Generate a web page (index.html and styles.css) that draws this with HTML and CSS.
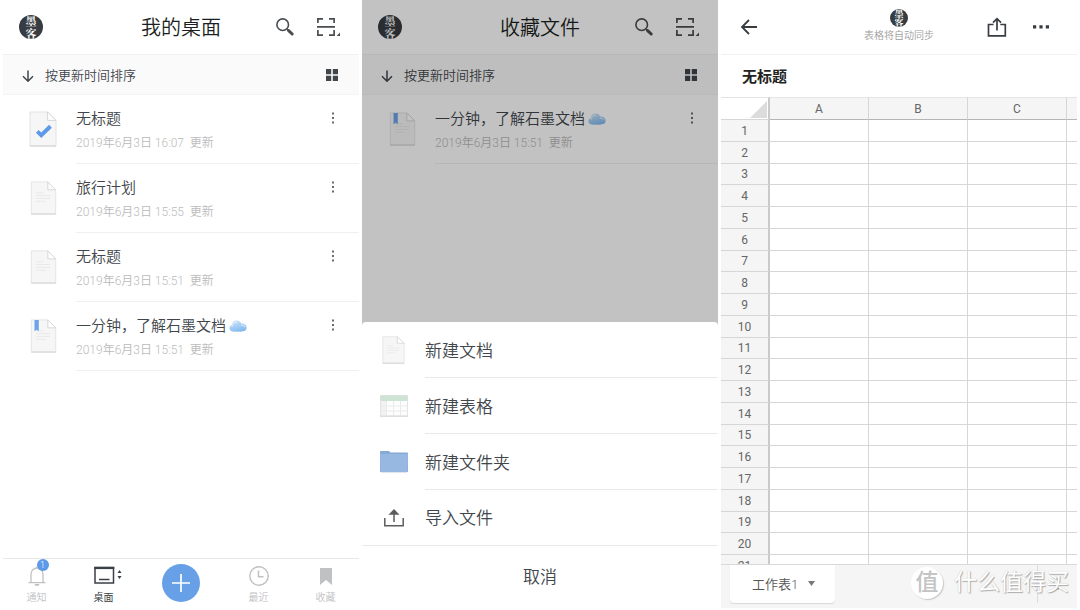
FILE: index.html
```
<!DOCTYPE html>
<html lang="zh-CN">
<head>
<meta charset="utf-8">
<title>石墨文档</title>
<link rel="stylesheet" href="styles.css">
</head>
<body>
<svg class="defs" aria-hidden="true">
  <defs>
    <linearGradient id="cloudFill" x1="0" y1="0" x2="0.4" y2="1">
      <stop offset="0" stop-color="#d3e8fa"/><stop offset="1" stop-color="#85bbef"/>
    </linearGradient>
    <symbol id="search" viewBox="0 0 20 20">
      <circle cx="7.7" cy="7.7" r="5.8" fill="none" stroke="currentColor" stroke-width="1.6"/>
      <path d="M12 12l1.5 1.5" stroke="currentColor" stroke-width="1.6"/>
      <path d="M13.6 13.6l3.6 3.4" stroke="currentColor" stroke-width="3" stroke-linecap="round"/>
    </symbol>
    <symbol id="scan" viewBox="0 0 24 20">
      <path d="M1.9 6V1.9H7M13 1.9h5.1V6M1.9 13v5.1H7M13 18.1h5.1V13M1 9.8h18" fill="none" stroke="currentColor" stroke-width="1.7"/>
      <path d="M24 15.6V19h-3.4z" fill="currentColor"/>
    </symbol>
    <symbol id="down" viewBox="0 0 12 12">
      <path d="M6 .6v10.2M1 6.2l5 5 5-5" fill="none" stroke="currentColor" stroke-width="1.5"/>
    </symbol>
    <symbol id="tiles" viewBox="0 0 12 12">
      <path d="M0 0h5.2v5.2H0zM6.8 0H12v5.2H6.8zM0 6.8h5.2V12H0zM6.8 6.8H12V12H6.8z" fill="currentColor"/>
    </symbol>
    <symbol id="more" viewBox="0 0 4 12">
      <path d="M1.2.6h1.6v1.8H1.2zM1.2 5.1h1.6v1.8H1.2zM1.2 9.6h1.6v1.8H1.2z" fill="currentColor"/>
    </symbol>
    <symbol id="page" viewBox="0 0 28 36">
      <path d="M1 1h17.6L27 9.4V35H1z" fill="#f6f6f6" stroke="#e2e2e2"/>
      <path d="M1 35h26" stroke="#d2d2d2"/>
      <path d="M18.6 1v8.4H27z" fill="#fff" stroke="#d6d6d6"/>
    </symbol>
    <symbol id="lines" viewBox="0 0 28 36">
      <path d="M6 12.5h8M6 15.500h15M6 18.500h15M6 21.500h10" stroke="#e8e8e8"/>
    </symbol>
    <symbol id="cloud" viewBox="0 0 18 12">
      <path d="M4.200 11.600C1.800 11.600.4 10 .4 8.300c0-1.600 1-2.700 2.400-3C2.900 2.400 4.900.4 7.600.4c2.200 0 4 1.200 4.700 3.200C15.200 3.500 17.600 5.100 17.600 7.700c0 2.300-1.700 3.700-4 3.600-1 .5-2 .5-2.900.1-1.100.6-2.500.6-3.500 0-.9.3-1.900.4-3 .2z" fill="url(#cloudFill)"/>
      <path d="M3 6.600c.5-3 2.500-4.700 5-4.300M12 5.200c1.900-.4 3.500.6 3.800 2" fill="none" stroke="#e6f3fd" stroke-width="1"/>
    </symbol>
  </defs>
</svg>

<main class="screens">
  <section class="screen">
    <header class="bar">
      <span class="avatar">墨<br>客</span>
      <h1 class="bar-title">我的桌面</h1>
      <div class="bar-actions">
        <button class="icon-btn" aria-label="搜索"><svg width="20" height="20"><use href="#search"/></svg></button>
        <button class="icon-btn" aria-label="扫描"><svg width="24" height="20"><use href="#scan"/></svg></button>
      </div>
    </header>
    <div class="sort">
      <button class="sort-btn"><svg width="12" height="12"><use href="#down"/></svg>按更新时间排序</button>
      <button class="icon-btn" aria-label="网格视图"><svg width="12" height="12"><use href="#tiles"/></svg></button>
    </div>
    <ul class="files">
      <li class="file">
        <span class="file-icon"><svg width="28" height="36" viewBox="0 0 28 36"><use href="#page"/><path d="M8.300 20.300l4 4 9.200-9" fill="none" stroke="#5f9ae6" stroke-width="4"/></svg></span>
        <div class="file-body">
          <div><h2 class="file-name">无标题</h2><p class="file-date">2019年6月3日 16:07&nbsp; 更新</p></div>
          <button class="more" aria-label="更多"><svg width="4" height="12"><use href="#more"/></svg></button>
        </div>
      </li>
      <li class="file">
        <span class="file-icon"><svg width="27" height="34" viewBox="0 0 28 36"><use href="#page"/><use href="#lines"/></svg></span>
        <div class="file-body">
          <div><h2 class="file-name">旅行计划</h2><p class="file-date">2019年6月3日 15:55&nbsp; 更新</p></div>
          <button class="more" aria-label="更多"><svg width="4" height="12"><use href="#more"/></svg></button>
        </div>
      </li>
      <li class="file">
        <span class="file-icon"><svg width="27" height="34" viewBox="0 0 28 36"><use href="#page"/><use href="#lines"/></svg></span>
        <div class="file-body">
          <div><h2 class="file-name">无标题</h2><p class="file-date">2019年6月3日 15:51&nbsp; 更新</p></div>
          <button class="more" aria-label="更多"><svg width="4" height="12"><use href="#more"/></svg></button>
        </div>
      </li>
      <li class="file">
        <span class="file-icon"><svg width="27" height="34" viewBox="0 0 28 36"><use href="#page"/><use href="#lines"/><path d="M4.500 1h4.500v12l-2.250-1.500L4.500 13z" fill="#6ba2ea"/></svg></span>
        <div class="file-body">
          <div><h2 class="file-name">一分钟，了解石墨文档<svg class="cloud" width="18" height="12"><use href="#cloud"/></svg></h2><p class="file-date">2019年6月3日 15:51&nbsp; 更新</p></div>
          <button class="more" aria-label="更多"><svg width="4" height="12"><use href="#more"/></svg></button>
        </div>
      </li>
    </ul>
    <nav class="tabs">
      <a class="tab" href="#notice">
        <span class="tab-icon">
          <svg width="20" height="22" viewBox="0 0 20 22"><path d="M4 17.500V9a6 6 0 0 1 12 0v8.500M1.500 17.600h17" fill="none" stroke="currentColor" stroke-width="1.300"/><path d="M10 1.500V3" stroke="currentColor" stroke-width="1.500"/><path d="M7.500 19h5a2.500 2 0 0 1-5 0z" fill="currentColor"/></svg>
          <span class="badge">1</span>
        </span>
        通知
      </a>
      <a class="tab active" href="#desktop">
        <span class="tab-icon"><svg class="spill" width="20" height="22" viewBox="0 0 20 22"><path d="M1 2.500h18.500v15.500H1z" fill="none" stroke="currentColor" stroke-width="1.500"/><path d="M.3 3h20" stroke="currentColor" stroke-width="2.200"/><path d="M5 14.500h10.500" stroke="currentColor" stroke-width="1.500"/><path d="M23.500 8l2-3 2 3zM23.500 11l2 3 2-3z" fill="currentColor"/></svg></span>
        桌面
      </a>
      <button class="add" aria-label="新建"><svg width="18" height="18" viewBox="0 0 18 18"><path d="M9 0v18M0 9h18" stroke="#fff" stroke-width="1.700"/></svg></button>
      <a class="tab" href="#recent">
        <span class="tab-icon"><svg width="20" height="22" viewBox="0 0 20 22"><circle cx="10" cy="11" r="9.200" fill="none" stroke="currentColor" stroke-width="1.400"/><path d="M9.500 5.500v6.300h5" fill="none" stroke="currentColor" stroke-width="1.500"/></svg></span>
        最近
      </a>
      <a class="tab" href="#favorites">
        <span class="tab-icon"><svg width="14" height="22" viewBox="0 0 14 22"><path d="M1 3h12v17l-6-5-6 5z" fill="currentColor"/></svg></span>
        收藏
      </a>
    </nav>
  </section>

  <section class="screen">
    <header class="bar">
      <span class="avatar">墨<br>客</span>
      <h1 class="bar-title">收藏文件</h1>
      <div class="bar-actions">
        <button class="icon-btn" aria-label="搜索"><svg width="20" height="20"><use href="#search"/></svg></button>
        <button class="icon-btn" aria-label="扫描"><svg width="24" height="20"><use href="#scan"/></svg></button>
      </div>
    </header>
    <div class="sort">
      <button class="sort-btn"><svg width="12" height="12"><use href="#down"/></svg>按更新时间排序</button>
      <button class="icon-btn" aria-label="网格视图"><svg width="12" height="12"><use href="#tiles"/></svg></button>
    </div>
    <ul class="files">
      <li class="file">
        <span class="file-icon"><svg width="27" height="34" viewBox="0 0 28 36"><use href="#page"/><use href="#lines"/><path d="M4.500 1h4.500v12l-2.250-1.500L4.500 13z" fill="#6ba2ea"/></svg></span>
        <div class="file-body">
          <div><h2 class="file-name">一分钟，了解石墨文档<svg class="cloud" width="18" height="12"><use href="#cloud"/></svg></h2><p class="file-date">2019年6月3日 15:51&nbsp; 更新</p></div>
          <button class="more" aria-label="更多"><svg width="4" height="12"><use href="#more"/></svg></button>
        </div>
      </li>
    </ul>
    <div class="scrim"></div>
    <div class="sheet">
      <button class="option"><span class="option-icon"><svg width="23" height="28" viewBox="0 0 28 36" preserveAspectRatio="none"><use href="#page"/><use href="#lines"/></svg></span><span class="option-label">新建文档</span></button>
      <button class="option"><span class="option-icon"><svg width="28" height="22" viewBox="0 0 28 22"><path d="M.5.500h27v20.500H.500z" fill="#fdfdfd" stroke="#e4e4e4"/><path d="M1 6h5v15H1z" fill="#f2f2f2"/><path d="M6.500 6v15M13.500 6v15M20.500 6v15M1 11h26M1 16h26" stroke="#ebebeb"/><path d="M.5.500h27V6H.500z" fill="#cfe3d5"/><path d="M0 21.200h28" stroke="#d4d4d4"/></svg></span><span class="option-label">新建表格</span></button>
      <button class="option"><span class="option-icon"><svg width="28" height="24" viewBox="0 0 28 24"><path d="M0 2q0-1 1-1h8l1.500 1.500H27q1 0 1 1V21q0 1-1 1H1q-1 0-1-1z" fill="#86a9d6"/><path d="M0 4h28l-.5 18H.5z" fill="#97b8e1"/><path d="M1 22.600h26" stroke="#dce4ef"/></svg></span><span class="option-label">新建文件夹</span></button>
      <button class="option last"><span class="option-icon"><svg width="22" height="20" viewBox="0 0 22 20"><path d="M1.800 10v7.800h18.400V10M11 14V5" fill="none" stroke="#5c5c5c" stroke-width="1.500"/><path d="M5.500 6.800L11 1l5.500 5.800z" fill="#5c5c5c"/></svg></span><span class="option-label">导入文件</span></button>
      <button class="cancel">取消</button>
    </div>
  </section>

  <section class="screen">
    <header class="bar">
      <button class="icon-btn back" aria-label="返回"><svg width="18" height="16" viewBox="0 0 18 16"><path d="M9 1L2 8l7 7M2 8h15" fill="none" stroke="currentColor" stroke-width="1.800"/></svg></button>
      <div class="sync"><span class="avatar small">墨<br>客</span><span>表格将自动同步</span></div>
      <div class="bar-actions sheet-actions">
        <button class="icon-btn" aria-label="分享"><svg width="20" height="20" viewBox="0 0 20 20"><path d="M6.500 7.500h-5v11.300h16.800V7.500h-5M10 13.500V2M6 5.600L10 1.600l4 4" fill="none" stroke="currentColor" stroke-width="1.700"/></svg></button>
        <button class="icon-btn" aria-label="更多"><svg width="16" height="4" viewBox="0 0 16 4"><path d="M0 .3h3.200v3.200H0zM6.400.3h3.200v3.200H6.400zM12.800.3H16v3.200h-3.200z" fill="currentColor"/></svg></button>
      </div>
    </header>
    <h1 class="doc-title">无标题</h1>
    <div class="grid-wrap">
      <table class="cells">
        <colgroup><col class="col-num"><col class="col-data"><col class="col-data"><col class="col-data"><col></colgroup>
        <thead><tr><th class="corner"><svg width="17" height="17" viewBox="0 0 17 17"><path d="M17 0v17H0z" fill="#dcdcdc"/></svg></th><th>A</th><th>B</th><th>C</th><th></th></tr></thead>
        <tbody>
          <tr><th>1</th><td></td><td></td><td></td><td></td></tr>
          <tr><th>2</th><td></td><td></td><td></td><td></td></tr>
          <tr><th>3</th><td></td><td></td><td></td><td></td></tr>
          <tr><th>4</th><td></td><td></td><td></td><td></td></tr>
          <tr><th>5</th><td></td><td></td><td></td><td></td></tr>
          <tr><th>6</th><td></td><td></td><td></td><td></td></tr>
          <tr><th>7</th><td></td><td></td><td></td><td></td></tr>
          <tr><th>8</th><td></td><td></td><td></td><td></td></tr>
          <tr><th>9</th><td></td><td></td><td></td><td></td></tr>
          <tr><th>10</th><td></td><td></td><td></td><td></td></tr>
          <tr><th>11</th><td></td><td></td><td></td><td></td></tr>
          <tr><th>12</th><td></td><td></td><td></td><td></td></tr>
          <tr><th>13</th><td></td><td></td><td></td><td></td></tr>
          <tr><th>14</th><td></td><td></td><td></td><td></td></tr>
          <tr><th>15</th><td></td><td></td><td></td><td></td></tr>
          <tr><th>16</th><td></td><td></td><td></td><td></td></tr>
          <tr><th>17</th><td></td><td></td><td></td><td></td></tr>
          <tr><th>18</th><td></td><td></td><td></td><td></td></tr>
          <tr><th>19</th><td></td><td></td><td></td><td></td></tr>
          <tr><th>20</th><td></td><td></td><td></td><td></td></tr>
          <tr><th>21</th><td></td><td></td><td></td><td></td></tr>
        </tbody>
      </table>
    </div>
    <footer class="sheet-bar">
      <button class="sheet-tab">工作表1<svg width="7" height="5" viewBox="0 0 7 5"><path d="M0 0h7L3.500 5z" fill="#777"/></svg></button>
      <button class="sheet-more" aria-label="更多"><svg width="4" height="12"><use href="#more"/></svg></button>
    </footer>
    <div class="watermark"><span class="mark">值</span><span>什么值得买</span></div>
  </section>
</main>
</body>
</html>
```
FILE: styles.css
```
* { box-sizing: border-box; }

body {
  margin: 0;
  background: #fff;
  color: #41464b;
  font-family: Roboto, "Noto Sans CJK SC", sans-serif;
  font-weight: 350;
}

button {
  margin: 0;
  padding: 0;
  border: 0;
  background: none;
  color: inherit;
  font: inherit;
}

h1, h2, p, ul { margin: 0; padding: 0; font-weight: inherit; }
svg { display: block; flex: none; }
.defs { position: absolute; width: 0; height: 0; }
.spill { overflow: visible; }

.screens {
  display: grid;
  grid-template-columns: repeat(3, minmax(0, 1fr));
  gap: 3px;
  height: 100vh;
  padding: 0 3px 2px;
}

.screen {
  position: relative;
  display: flex;
  flex-direction: column;
  min-height: 0;
  background: #fff;
}

/* Top bar */
.bar {
  display: grid;
  grid-template-columns: 1fr auto 1fr;
  align-items: center;
  height: 55px;
  flex: none;
  padding: 0 16px;
  border-bottom: 1px solid #f1f1f1;
}
.bar-title { padding-top: 2px; color: #1c1f21; font-size: 20px; line-height: 28px; }
.bar-actions { display: flex; justify-content: flex-end; align-items: center; gap: 21px; padding-right: 3px; color: #4a4d50; }
.sheet-actions { gap: 26px; padding-right: 12px; color: #383d42; }
.icon-btn { display: flex; }
.back { padding-left: 3px; color: #383d42; }

.avatar {
  display: flex;
  align-items: center;
  justify-content: center;
  width: 24px;
  height: 24px;
  border-radius: 50%;
  overflow: hidden;
  background: #363c41;
  color: #fff;
  font-family: "Noto Serif CJK SC", "Noto Sans CJK SC", serif;
  font-size: 11px;
  font-weight: 700;
  line-height: 12px;
}
.avatar.small { width: 18px; height: 18px; font-size: 9px; line-height: 9px; }

/* Sort strip */
.sort {
  display: flex;
  align-items: center;
  justify-content: space-between;
  height: 40px;
  flex: none;
  padding: 0 21px 0 19px;
  border-bottom: 1px solid #f4f4f4;
  background: #fafafa;
}
.sort-btn { display: flex; align-items: center; gap: 11px; padding-top: 2px; font-size: 13px; line-height: 20px; }

/* File list */
.files { flex: 1; list-style: none; }
.file { display: flex; gap: 19px; padding-left: 26px; }
.file-icon { display: flex; align-items: center; justify-content: center; width: 28px; height: 36px; margin-top: 16px; }
.file-body {
  display: flex;
  flex: 1;
  justify-content: space-between;
  align-items: flex-start;
  height: 69px;
  padding: 13px 24px 0 0;
  border-bottom: 1px solid #f0f0f0;
}
.file-name { display: flex; align-items: center; gap: 3px; font-size: 15px; line-height: 22px; }
.file-date { margin-top: 4px; color: #bbb; font-size: 12px; line-height: 18px; }
.more { display: flex; padding-top: 4px; }

/* Bottom navigation */
.tabs {
  display: grid;
  grid-template-columns: 67px 67px 1fr 67px 67px;
  height: 50px;
  flex: none;
  border-top: 1px solid #e8e8e8;
}
.tab {
  display: flex;
  flex-direction: column;
  align-items: center;
  gap: 3px;
  padding-top: 6px;
  color: #bfc1c3;
  font-size: 10px;
  line-height: 16px;
  text-decoration: none;
}
.tab.active { color: #3b4045; font-weight: 400; }
.tab-icon { position: relative; }
.badge {
  position: absolute;
  top: -6px;
  left: 10px;
  width: 12px;
  height: 12px;
  border-radius: 50%;
  background: #5c99e6;
  color: #fff;
  font-size: 9px;
  line-height: 12px;
  text-align: center;
}
.add {
  display: flex;
  align-items: center;
  justify-content: center;
  margin-top: 5px;
  justify-self: center;
  width: 38px;
  height: 38px;
  border-radius: 50%;
  background: #68a0e8;
}

/* Action sheet */
.scrim { position: absolute; inset: 0; background: rgba(0, 0, 0, .24); }
.sheet {
  position: absolute;
  right: 0;
  bottom: 0;
  left: 0;
  display: grid;
  grid-template-rows: repeat(4, 56px) 62px;
  border-radius: 4px 4px 0 0;
  background: #fff;
  font-size: 17px;
  line-height: 24px;
}
.option { display: flex; align-items: stretch; text-align: left; }
.option-icon { display: flex; align-items: center; justify-content: center; width: 63px; }
.option-label { display: flex; flex: 1; align-items: center; padding-top: 2px; border-bottom: 1px solid #e9e9e9; }
.option.last { border-bottom: 1px solid #e9e9e9; }
.last .option-label { padding-top: 0; border-bottom: 0; }

/* Spreadsheet */
.sync {
  display: flex;
  flex-direction: column;
  align-items: center;
  color: #9b9b9b;
  font-size: 10px;
  line-height: 18px;
}
.doc-title { padding: 11px 21px 9px; color: #222; font-size: 15px; font-weight: 700; line-height: 22px; }
.grid-wrap { flex: 1; min-height: 0; overflow: hidden; }
.cells {
  width: 100%;
  height: 480px;
  table-layout: fixed;
  border-spacing: 0;
  color: #666;
  font-size: 12px;
  line-height: 16px;
}
.col-num { width: 49px; }
.col-data { width: 99px; }
.cells th, .cells td { padding: 0; border-right: 1px solid #d6d6d6; border-bottom: 1px solid #d6d6d6; }
.cells th { padding-top: 1px; background: #f5f5f5; font-weight: 400; }
.cells thead th { height: 23px; border-top: 1px solid #e4e4e4; border-bottom-color: #b5b5b5; }
.cells th:first-child { border-right: 2px solid #cacaca; }
.cells .corner { background: #fff; border-bottom-color: #d6d6d6; border-right-color: #e4e4e4; }
.corner svg { margin: 0 1px 0 auto; }
.cells tr > :last-child { border-right: 0; }

.sheet-bar {
  display: flex;
  justify-content: space-between;
  align-items: flex-start;
  height: 44px;
  flex: none;
  padding: 0 0 5px 9px;
  border-top: 1px solid #d9d9d9;
  background: #f5f5f5;
}
.sheet-tab {
  display: flex;
  align-items: center;
  gap: 10px;
  height: 38px;
  padding: 0 20px 2px 22px;
  border-radius: 0 0 4px 4px;
  background: #fff;
  box-shadow: 0 1px 1px #d8d8d8;
  color: #555;
  font-size: 13px;
}
.sheet-more {
  display: flex;
  align-items: center;
  justify-content: center;
  width: 40px;
  height: 38px;
  border-left: 1px solid #dcdcdc;
  color: #777;
}

.watermark {
  position: absolute;
  right: 8px;
  bottom: 8px;
  display: flex;
  align-items: center;
  gap: 11px;
  color: #fff;
  font-size: 23px;
  font-weight: 400;
  line-height: 34px;
  text-shadow: 1px 1px 1px #aaa, 0 0 1px #bbb;
}
.mark {
  width: 32px;
  height: 32px;
  border-radius: 50%;
  background: #fff;
  box-shadow: 1px 1px 1px #c8c8c8;
  color: #c4c4c4;
  font-weight: 500;
  line-height: 32px;
  text-align: center;
  text-shadow: none;
}
```
